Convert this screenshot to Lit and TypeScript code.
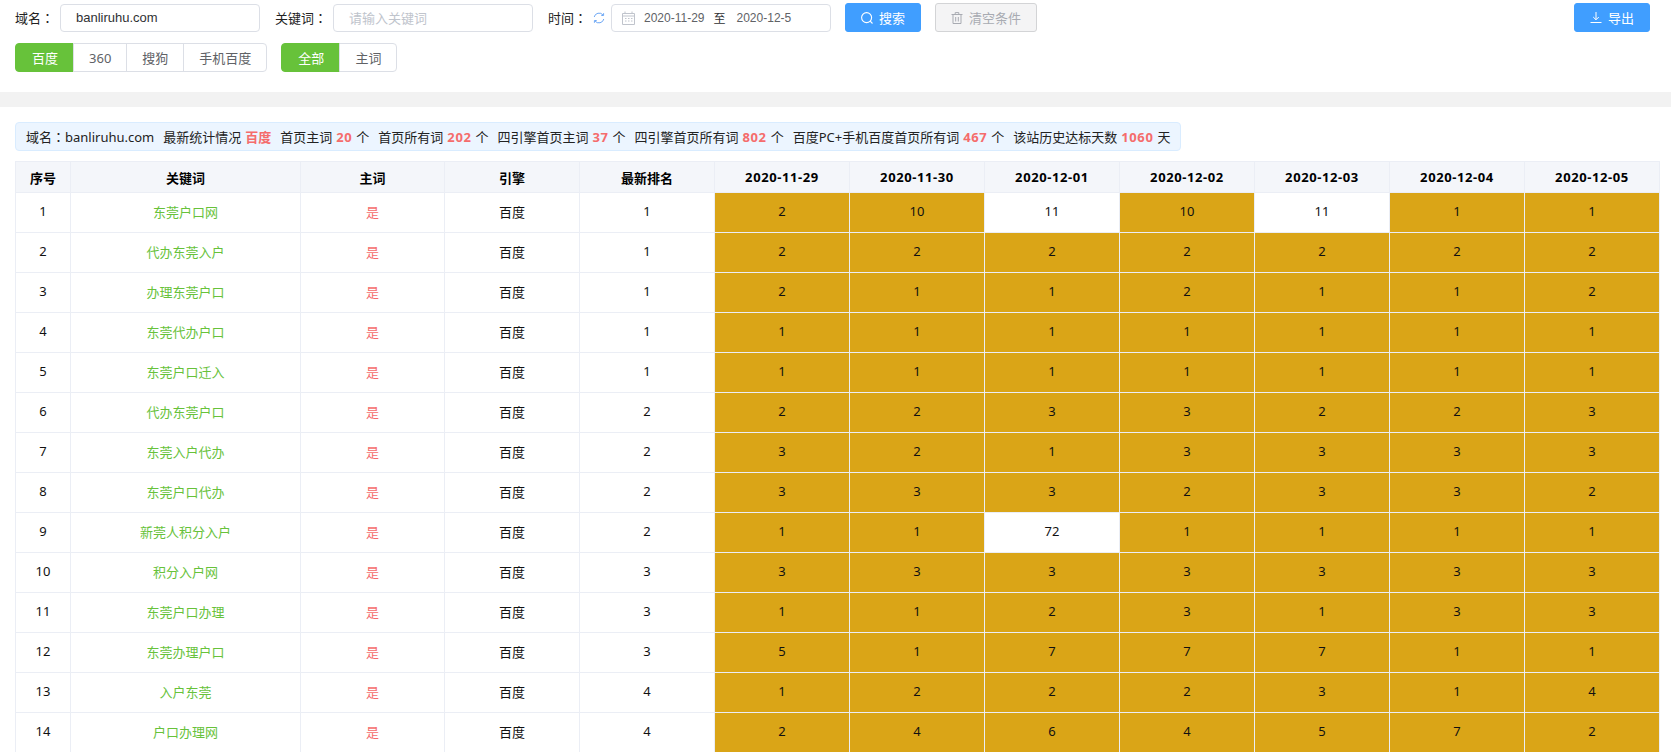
import { LitElement, html, css } from "lit";
import { customElement } from "lit/decorators.js";

const dates = ["2020-11-29", "2020-11-30", "2020-12-01", "2020-12-02", "2020-12-03", "2020-12-04", "2020-12-05"];
const rows: [string, number, number[]][] = [
  ["东莞户口网", 1, [2, 10, 11, 10, 11, 1, 1]],
  ["代办东莞入户", 1, [2, 2, 2, 2, 2, 2, 2]],
  ["办理东莞户口", 1, [2, 1, 1, 2, 1, 1, 2]],
  ["东莞代办户口", 1, [1, 1, 1, 1, 1, 1, 1]],
  ["东莞户口迁入", 1, [1, 1, 1, 1, 1, 1, 1]],
  ["代办东莞户口", 2, [2, 2, 3, 3, 2, 2, 3]],
  ["东莞入户代办", 2, [3, 2, 1, 3, 3, 3, 3]],
  ["东莞户口代办", 2, [3, 3, 3, 2, 3, 3, 2]],
  ["新莞人积分入户", 2, [1, 1, 72, 1, 1, 1, 1]],
  ["积分入户网", 3, [3, 3, 3, 3, 3, 3, 3]],
  ["东莞户口办理", 3, [1, 1, 2, 3, 1, 3, 3]],
  ["东莞办理户口", 3, [5, 1, 7, 7, 7, 1, 1]],
  ["入户东莞", 4, [1, 2, 2, 2, 3, 1, 4]],
  ["户口办理网", 4, [2, 4, 6, 4, 5, 7, 2]],
];

const stats: [string, string, string][] = [
  ["首页主词", "20", "个"],
  ["首页所有词", "202", "个"],
  ["四引擎首页主词", "37", "个"],
  ["四引擎首页所有词", "802", "个"],
  ["百度PC+手机百度首页所有词", "467", "个"],
  ["该站历史达标天数", "1060", "天"],
];

@customElement("app-root")
export class AppRoot extends LitElement {
  static styles = css`
    :host {
      display: block;
      height: 100vh;
      overflow: hidden;
      background: #fff;
      color: #222;
      font: 13px "Noto Sans", "Noto Sans CJK SC", sans-serif;
    }
    .toolbar { padding: 3px 21px 20px 15px; }
    .row { display: flex; align-items: center; height: 29px; }
    .row + .row { margin-top: 11px; }
    .label { white-space: nowrap; }
    .colon { font-family: "Noto Sans CJK TC", sans-serif; }
    .l1 { width: 45px; }
    .l2 { width: 58px; margin-left: 15px; }
    .l3 { width: 45px; margin-left: 15px; }
    .input {
      box-sizing: border-box;
      width: 200px;
      height: 28px;
      border: 1px solid #dcdfe6;
      border-radius: 4px;
      padding: 0 15px;
      display: flex;
      align-items: center;
      font-family: "Liberation Sans", "Noto Sans CJK SC", sans-serif;
      color: #303133;
    }
    .placeholder { color: #c0c4cc; }
    .refresh { width: 12px; height: 12px; margin-right: 6px; color: #6ea8f5; flex: none; }
    .date {
      box-sizing: border-box;
      width: 220px;
      height: 28px;
      border: 1px solid #dcdfe6;
      border-radius: 4px;
      display: flex;
      align-items: center;
      padding-left: 10px;
      font: 12px "Liberation Sans", "Noto Sans CJK SC", sans-serif;
      color: #606266;
    }
    .date svg { width: 13px; height: 14px; color: #c0c4cc; margin-right: 9px; flex: none; }
    .date .to { color: #303133; margin: 0 11px 0 9px; }
    .btn {
      box-sizing: border-box;
      height: 29px;
      border-radius: 3px;
      display: flex;
      align-items: center;
      justify-content: center;
      gap: 6px;
      border: 1px solid #409eff;
      background: #409eff;
      color: #fff;
    }
    .btn svg { width: 12px; height: 12px; flex: none; }
    .search { width: 76px; margin-left: 14px; }
    .clear { width: 102px; margin-left: 14px; background: #f4f4f5; border-color: #d3d4d6; color: #a8abb2; }
    .export { width: 76px; margin-left: auto; }
    .group { display: flex; height: 29px; }
    .group + .group { margin-left: 14px; }
    .group span {
      box-sizing: border-box;
      padding: 0 15px;
      display: flex;
      align-items: center;
      border: 1px solid #dcdfe6;
      margin-left: -1px;
      color: #606266;
    }
    .group span:first-child { margin-left: 0; padding-left: 16px; border-radius: 4px 0 0 4px; }
    .group span:last-child { border-radius: 0 4px 4px 0; }
    .group span.on { background: #67c23a; border-color: #67c23a; color: #fff; }
    .divider { height: 15px; background: #f2f2f2; }
    .main { padding: 15px 11px 0 15px; }
    .info {
      display: inline-flex;
      box-sizing: border-box;
      height: 29px;
      align-items: center;
      gap: 9px;
      padding: 0 10px 0 10px;
      background: #ecf5ff;
      border: 1px solid #d9ecff;
      border-radius: 4px;
      white-space: pre;
      word-spacing: 0.6px;
      vertical-align: top;
    }
    .info b { color: #f56c6c; letter-spacing: 0.6px; }
    .red { color: #f56c6c; font-weight: 700; }
    .table-wrap { margin-top: 10px; }
    table {
      border-collapse: collapse;
      table-layout: fixed;
      width: 1645px;
      text-align: center;
    }
    th, td { border: 1px solid #ebeef5; padding: 0; color: #111; }
    th { height: 30px; background: #f4f6fa; font-weight: 700; color: #000; }
    th.d { letter-spacing: 0.6px; }
    td { padding-bottom: 3px; box-sizing: border-box; height: 40px; }
    td.kw { color: #67c23a; }
    td.yes { color: #f56c6c; }
    td.gold { background: #daa517; }
    .c0 { width: 55px; }
    .c1 { width: 230px; }
    .c2 { width: 144px; }
    .c3, .c4 { width: 135px; }
    .cd { width: 135px; }
  `;

  render() {
    return html`
      <div class="toolbar">
        <div class="row">
          <span class="label l1">域名<span class="colon">：</span></span>
          <div class="input">banliruhu.com</div>
          <span class="label l2">关键词<span class="colon">：</span></span>
          <div class="input placeholder">请输入关键词</div>
          <span class="label l3">时间<span class="colon">：</span></span>
          <svg class="refresh" viewBox="0 0 12 12" fill="none" stroke="currentColor" stroke-width="1">
            <path d="M1.2 5A5 5 0 0 1 10 3" />
            <path d="M10.8 7A5 5 0 0 1 2 9" />
            <path d="M10.6 1.2V3.5H8.3M1.4 10.8V8.5H3.7" />
          </svg>
          <div class="date">
            <svg viewBox="0 0 13 14" fill="none" stroke="currentColor" stroke-width="1">
              <path d="M.5 2.5h12v11H.5zM.5 5h12M3 .5v2M10 .5v2" />
              <path d="M3 7.5h1.5M6 7.5h1.5M9 7.5h1.5M3 10h1.5M6 10h1.5M9 10h1.5" />
            </svg>
            <span>2020-11-29</span><span class="to">至</span><span>2020-12-5</span>
          </div>
          <div class="btn search">
            <svg viewBox="0 0 12 12" fill="none" stroke="currentColor" stroke-width="1.1">
              <circle cx="5.6" cy="5.6" r="5" /><path d="M9.2 9.2l2.3 2.3" />
            </svg>
            搜索
          </div>
          <div class="btn clear">
            <svg viewBox="0 0 12 12" fill="none" stroke="currentColor" stroke-width="1">
              <path d="M.5 2.5h11M2 2.5v9h8v-9M4.2 2.5V.6h3.6v1.9M4.7 5v4.5M7.3 5v4.5" />
            </svg>
            清空条件
          </div>
          <div class="btn export">
            <svg viewBox="0 0 12 12" fill="none" stroke="currentColor" stroke-width="1">
              <path d="M6 0v7.5M3.2 5L6 7.8 8.8 5M.5 10.5h11" />
            </svg>
            导出
          </div>
        </div>
        <div class="row">
          <div class="group">
            <span class="on">百度</span><span>360</span><span>搜狗</span><span>手机百度</span>
          </div>
          <div class="group"><span class="on">全部</span><span>主词</span></div>
        </div>
      </div>
      <div class="divider"></div>
      <div class="main">
        <div class="info">
          <span>域名<span class="colon">：</span>banliruhu.com</span>
          <span>最新统计情况 <span class="red">百度</span></span>
          ${stats.map(([a, n, u]) => html`<span>${a} <b>${n}</b> ${u}</span>`)}
        </div>
        <div class="table-wrap">
          <table>
            <colgroup>
              <col class="c0" /><col class="c1" /><col class="c2" /><col class="c3" /><col class="c4" />
              ${dates.map(() => html`<col class="cd" />`)}
            </colgroup>
            <thead>
              <tr>
                <th>序号</th><th>关键词</th><th>主词</th><th>引擎</th><th>最新排名</th>
                ${dates.map((d) => html`<th class="d">${d}</th>`)}
              </tr>
            </thead>
            <tbody>
              ${rows.map(
                ([k, r, vals], i) => html`
                  <tr>
                    <td>${i + 1}</td>
                    <td class="kw">${k}</td>
                    <td class="yes">是</td>
                    <td>百度</td>
                    <td>${r}</td>
                    ${vals.map((v) => html`<td class=${v <= 10 ? "gold" : ""}>${v}</td>`)}
                  </tr>
                `
              )}
            </tbody>
          </table>
        </div>
      </div>
    `;
  }
}
